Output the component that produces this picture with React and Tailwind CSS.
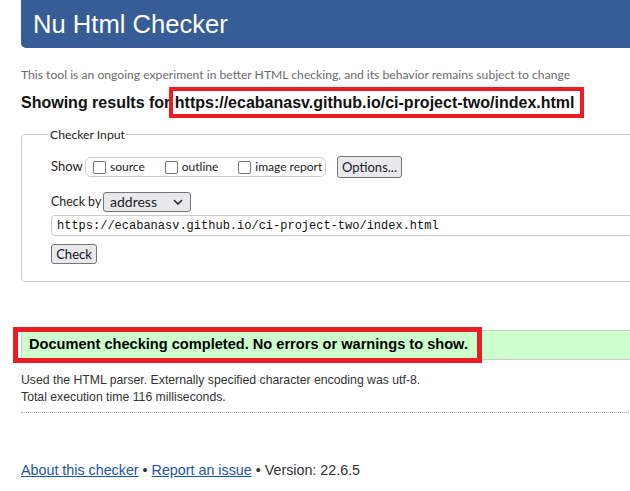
import React from 'react';

const Box = ({ label }) => (
  <label className="flex items-center gap-[4px] whitespace-nowrap">
    <span className="w-[13px] h-[13px] border border-[#767676] rounded-[2px] bg-white" />
    <span>{label}</span>
  </label>
);

const App = () => {
  return (
    <div className="relative w-[630px] h-[491px] overflow-hidden bg-white font-['Liberation_Sans',Arial,sans-serif] text-[#333]">
      <div className="ml-[21px] w-[700px]">
        {/* header */}
        <div className="h-[48px] bg-[#365d95] rounded-bl-[5px] pl-[12px] flex items-center">
          <h1 className="text-white text-[25.6px] leading-none pt-[2px]">Nu Html Checker</h1>
        </div>

        <p className="mt-[19px] text-[12.15px] leading-[16px] text-[#6b6b6b] font-['Lato',sans-serif]">
          This tool is an ongoing experiment in better HTML checking, and its behavior remains subject to change
        </p>

        <h2 className="mt-[10px] text-[16px] leading-[20px] font-bold text-[#111]">
          Showing results for <span>https://ecabanasv.github.io/ci-project-two/index.html</span>
        </h2>

        {/* checker input */}
        <fieldset className="mt-[13px] w-[640px] border border-[#cccccc] rounded-[4px] px-[29px] pb-[17px] font-['Lato',sans-serif] text-[12px] text-[#222]">
          <legend className="-ml-[2px] px-[1px] text-[12.2px] leading-[17px]">Checker Input</legend>

          <div className="mt-[13px] flex items-center h-[22px]">
            <span className="w-[34px] text-[13px]">Show</span>
            <div className="h-[20px] w-[241px] border border-[#cccccc] rounded-[6px] flex items-center pl-[7px] gap-[20px]">
              <Box label="source" />
              <Box label="outline" />
              <Box label="image report" />
            </div>
            <button className="ml-[11px] h-[22px] w-[65px] bg-[#e9e9ed] border border-[#767676] rounded-[3px] text-[13px] leading-none">
              Options...
            </button>
          </div>

          <div className="mt-[14px] flex items-center h-[20px]">
            <span className="w-[52px] whitespace-nowrap text-[12.4px]">Check by</span>
            <div className="h-[20px] w-[88px] bg-[#e9e9ed] border border-[#767676] rounded-[3px] flex items-center justify-between pl-[6px] pr-[7px]">
              <span className="text-[14px] leading-none">address</span>
              <svg width="10" height="6" viewBox="0 0 10 6" fill="none" stroke="#222" strokeWidth="1.5">
                <path d="M1 1l4 4 4-4" />
              </svg>
            </div>
          </div>

          <div className="mt-[3px] h-[21px] border border-[#cccccc] rounded-l-[4px] flex items-center pl-[5px] font-['Liberation_Mono',monospace] text-[12px] text-[#111]">
            https://ecabanasv.github.io/ci-project-two/index.html
          </div>

          <button className="mt-[8px] h-[20px] w-[46px] bg-[#e9e9ed] border border-[#767676] rounded-[3px] text-[13px] leading-none text-[#111]">
            Check
          </button>
        </fieldset>

        {/* result */}
        <div className="mt-[48px] h-[30px] bg-[#ccffcc] border border-[#cccccc] border-r-0 flex items-center pl-[7px]">
          <span className="text-[14.6px] font-bold text-black">Document checking completed. No errors or warnings to show.</span>
        </div>

        <p className="mt-[12px] text-[12.25px] leading-[16.5px] text-[#333]">
          Used the HTML parser. Externally specified character encoding was utf-8.
        </p>
        <p className="text-[12.25px] leading-[16.5px] text-[#333]">Total execution time 116 milliseconds.</p>

        <div className="mt-[7px] border-t border-dotted border-[#aaaaaa]" />

        <p className="mt-[48px] text-[14.3px] leading-[18px] text-[#333]">
          <a href="#" className="text-[#1a55a8] underline">About this checker</a> •{' '}
          <a href="#" className="text-[#1a55a8] underline">Report an issue</a> • Version: 22.6.5
        </p>
      </div>

      {/* annotation boxes */}
      <div className="absolute left-[169px] top-[87px] w-[415px] h-[31px] border-[4px] border-[#ec1c24]" />
      <div className="absolute left-[13px] top-[327px] w-[469px] h-[36px] border-[5px] border-[#ec1c24]" />
    </div>
  );
};

export default App;
